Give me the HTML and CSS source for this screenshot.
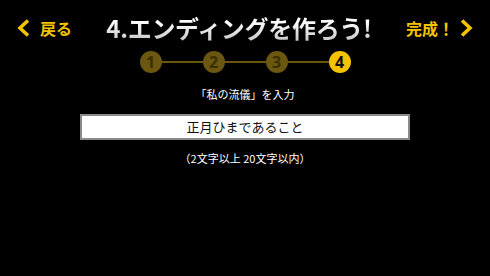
FILE: index.html
```html
<!DOCTYPE html>
<html lang="ja">
<head>
<meta charset="utf-8">
<title>エンディングを作ろう</title>
<link rel="stylesheet" href="styles.css">
</head>
<body>
<div class="screen">
  <header class="header">
    <div class="nav back">
      <svg class="chev" width="13" height="18" viewBox="0 0 13 18"><polyline points="11,1.5 3,9 11,16.5" fill="none" stroke="#f4c300" stroke-width="3.6" stroke-linejoin="miter"/></svg>
      <span>戻る</span>
    </div>
    <h1 class="title">4.エンディングを作ろう!</h1>
    <div class="nav done">
      <span>完成！</span>
      <svg class="chev" width="13" height="18" viewBox="0 0 13 18"><polyline points="2,1.5 10,9 2,16.5" fill="none" stroke="#f4c300" stroke-width="3.6" stroke-linejoin="miter"/></svg>
    </div>
  </header>
  <div class="steps">
    <div class="step">1</div>
    <div class="link"></div>
    <div class="step">2</div>
    <div class="link"></div>
    <div class="step">3</div>
    <div class="link"></div>
    <div class="step active">4</div>
  </div>
  <p class="prompt">「私の流儀」を入力</p>
  <div class="field">正月ひまであること</div>
  <p class="hint">（2文字以上 20文字以内）</p>
</div>
</body>
</html>
```
FILE: styles.css
```css
html, body {
  margin: 0;
  padding: 0;
  background: #000;
}
.screen {
  width: 490px;
  height: 276px;
  background: #000;
  font-family: "Noto Sans CJK JP", "Noto Sans", sans-serif;
  color: #fff;
  overflow: hidden;
}
.header {
  display: flex;
  align-items: center;
  height: 32px;
  padding: 12px 17px 0 17px;
}
.nav {
  display: flex;
  align-items: center;
  color: #f4c300;
  font-size: 16px;
  font-weight: bold;
  line-height: 20px;
}
.back { gap: 10px; }
.done { gap: 6px; }
.chev { display: block; }
.title {
  flex: 1;
  margin: 0;
  text-align: center;
  font-size: 24px;
  font-weight: bold;
  line-height: 32px;
  letter-spacing: -0.3px;
  background: linear-gradient(#ffffff 30%, #c8c8c8 90%);
  -webkit-background-clip: text;
  background-clip: text;
  color: transparent;
}
.steps {
  display: flex;
  align-items: center;
  justify-content: center;
  margin-top: 7px;
}
.step {
  width: 22px;
  height: 22px;
  border-radius: 50%;
  background: #6b570f;
  color: #3a2f00;
  font-family: "Noto Sans", sans-serif;
  font-weight: bold;
  font-size: 16px;
  line-height: 22px;
  text-align: center;
}
.step.active {
  background: #f4c300;
  color: #111;
}
.link {
  width: 41px;
  height: 2px;
  background: #6b570f;
}
.prompt {
  margin: 14px 0 0 0;
  text-align: center;
  font-size: 11px;
  line-height: 14px;
  color: #fff;
}
.field {
  margin: 13px 80px 0 80px;
  height: 22px;
  border: 2px solid #8a8a8a;
  background: #fff;
  color: #111;
  font-size: 13px;
  line-height: 22px;
  text-align: center;
}
.hint {
  margin: 11px 0 0 0;
  text-align: center;
  font-size: 11px;
  line-height: 14px;
  color: #fff;
}
```
